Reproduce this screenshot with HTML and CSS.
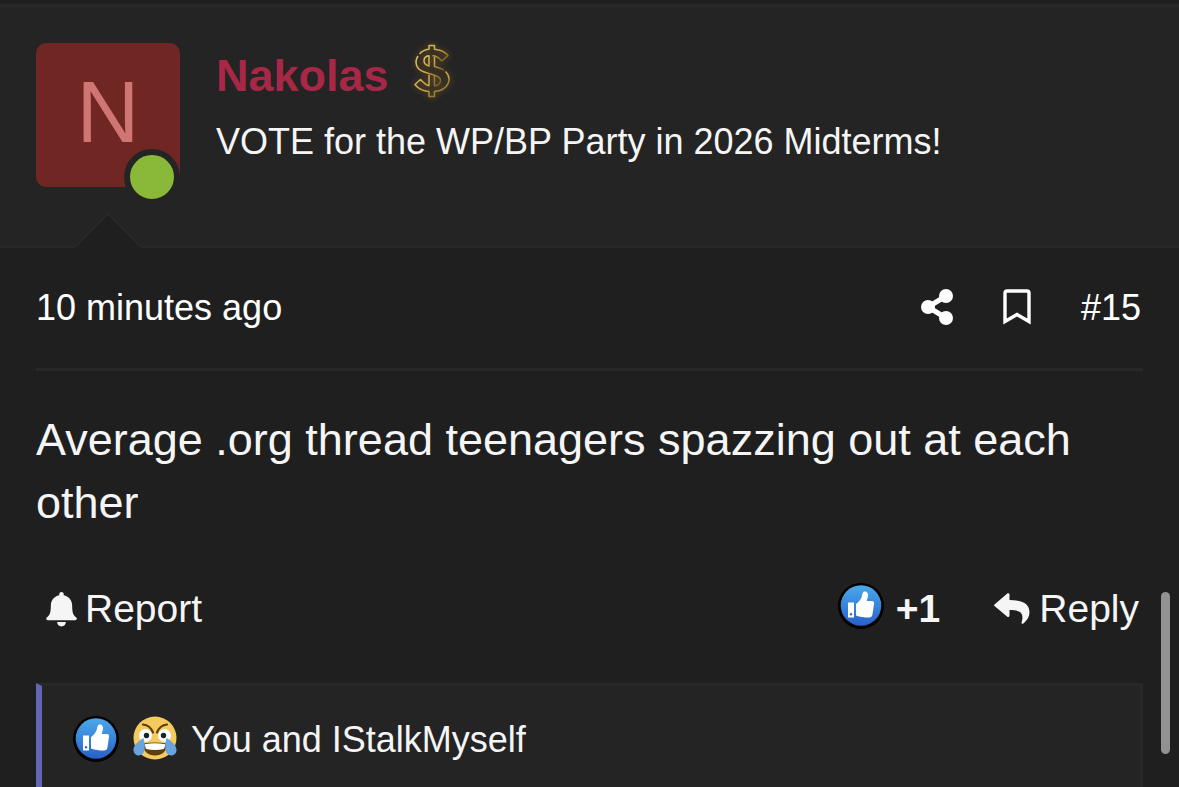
FILE: index.html
```html
<!DOCTYPE html>
<html lang="en">
<head>
<meta charset="utf-8">
<meta name="viewport" content="width=device-width, initial-scale=1">
<title>Thread</title>
<link rel="stylesheet" href="styles.css">
</head>
<body>
<svg class="defs" aria-hidden="true">
  <defs>
    <linearGradient id="like-fill" x1="0" y1="0" x2="0" y2="1">
      <stop offset="0" stop-color="#4ba9ea"/>
      <stop offset="1" stop-color="#2761c8"/>
    </linearGradient>
    <linearGradient id="gold" x1="0" y1="0" x2="1" y2="1">
      <stop offset="0" stop-color="#dcc168"/>
      <stop offset=".55" stop-color="#c5a045"/>
      <stop offset="1" stop-color="#6d5522"/>
    </linearGradient>
    <symbol id="like" viewBox="0 0 46 46">
      <circle cx="23" cy="23" r="23" fill="#000"/>
      <circle cx="23" cy="22.500" r="20.300" fill="url(#like-fill)"/>
      <path fill="#fff" d="M10 19.500h6V34.500h-6zM18 21c2.500-1.500 5-4.500 6-8 .5-2.500.6-4.500 3-4.500s3.500 2.500 2.900 5l-1.200 4.500H34c1.600 0 2.300 1.200 2 2.800l-1.600 11c-.4 1.800-1.400 2.700-3.400 2.700-5 0-9-.4-13-2z"/>
      <circle cx="13" cy="31.300" r="1.200" fill="#2b6bcd"/>
    </symbol>
  </defs>
</svg>
<article class="post">
  <header class="user">
    <a class="avatar" href="#" aria-label="Nakolas">N<span class="online"></span></a>
    <div class="identity">
      <div class="name-row">
        <a class="name" href="#">Nakolas</a>
        <svg class="dollar" viewBox="0 0 48 62" aria-hidden="true">
          <g fill="none" stroke="url(#gold)" stroke-width="1.500" stroke-linejoin="round">
            <path d="M12.500 14C14.500 11.500 18 9.800 22 9.300V5.500h5.500v3.800C33 9.800 38 12 41 15.500L34.800 21C32 17.500 29 15.700 25.500 15.700"/>
            <path d="M11 16c-4 6.500-1.500 13 5 15.500 6 2.300 11.500 3.500 14.500 5 5 2.500 3.500 8.500-3 9.500V34.500"/>
            <path d="M22 15.700c-6.500.8-6.800 8.500 0 10.300zM27.500 17v9.500c4 1.200 7 2 9.500 3.800"/>
            <path d="M38.500 31.500c7 7 3.500 18.500-11 20v5H22v-5c-6-.5-11-3-14-7l5.500-5c3 3.500 5.500 5.500 8.500 6.200V35"/>
          </g>
        </svg>
      </div>
      <div class="title">VOTE for the WP/BP Party in 2026 Midterms!</div>
    </div>
    <svg class="pointer" viewBox="0 0 66 35" aria-hidden="true">
      <path fill="#1f1f1f" d="M0 35 33 1l33 34z"/>
      <path fill="none" stroke="#282828" stroke-width="2" d="M1 33 33 1l32 32"/>
    </svg>
  </header>
  <div class="content">
    <div class="meta">
      <a href="#"><time>10 minutes ago</time></a>
      <div class="tools">
        <button type="button" aria-label="Share"><svg class="share" viewBox="0 0 32 36"><path d="M25 7 7 18l18 11" fill="none" stroke="currentColor" stroke-width="5"/><g fill="currentColor"><circle cx="25" cy="7" r="7"/><circle cx="7" cy="18" r="7"/><circle cx="25" cy="29" r="7"/></g></svg></button>
        <button type="button" aria-label="Bookmark"><svg class="mark" viewBox="0 0 28 36"><path d="M2 32.500V4q0-2 2-2h20q2 0 2 2v28.500l-12-7z" fill="none" stroke="currentColor" stroke-width="3.400"/></svg></button>
        <a href="#">#15</a>
      </div>
    </div>
    <p class="message">Average .org thread teenagers spazzing out at each other</p>
    <div class="actions">
      <button type="button" class="report"><svg class="bell" viewBox="0 0 32 36" aria-hidden="true"><path fill="currentColor" d="M16 0c1.500 0 2.300 1 2.300 2.300v1C24 4.500 27 9 27 14c0 7 1 9.500 4 12 1.500 1.400.6 3-.8 3H1.800C.4 29-.5 27.400 1 26c3-2.500 4-5 4-12C5 9 8 4.500 13.700 3.300v-1C13.700 1 14.500 0 16 0zm-4.500 31h9c0 2.700-2 4.500-4.500 4.500S11.500 33.700 11.500 31z"/></svg>Report</button>
      <div class="respond">
        <button type="button" class="liked" aria-label="Like, +1"><svg class="reaction" aria-hidden="true"><use href="#like"/></svg><b>+1</b></button>
        <button type="button" class="reply"><svg class="arrow" viewBox="0 0 36 32" aria-hidden="true"><path fill="currentColor" d="M.5 11.500 13 .7c1.200-1 2.500-.4 2.500 1V7C28 7.200 35.500 10 35.500 19.500c0 4-2.500 8-6 11-1 .8-2.300 0-1.900-1.300C30.500 20 26 17 15.500 17v5.500c0 1.400-1.400 2-2.500 1L.5 13c-.6-.5-.6-1 0-1.500z"/></svg>Reply</button>
      </div>
    </div>
    <a class="reactions" href="#">
      <svg class="reaction" aria-hidden="true"><use href="#like"/></svg>
      <svg class="laugh" viewBox="0 0 44 44" aria-hidden="true">
        <circle cx="22" cy="22" r="21.500" fill="#f4cb61"/>
        <circle cx="12.500" cy="19.500" r="6.500" fill="#fff"/><circle cx="31.500" cy="19.500" r="6.500" fill="#fff"/>
        <circle cx="13.500" cy="19.500" r="2.700" fill="#18242b"/><circle cx="30.500" cy="19.500" r="2.700" fill="#18242b"/>
        <path d="M10 8.500C15.500 9 18 11.500 20 16.500M34 8.500C28.500 9 26 11.500 24 16.500" fill="none" stroke="#5d3f0d" stroke-width="2.200" stroke-linecap="round"/>
        <path d="M10 27.500c8-1.500 16-1.500 24 0 0 8-5 12-12 12s-12-4-12-12z" fill="#5d3f0d"/>
        <path d="M11.500 28.200c7-1.200 14-1.200 21 0l-1.500 4.800c-6 1.200-12 1.200-18 0z" fill="#fff"/>
        <path d="M10.500 22C5 25.500 0 29.500.5 34.500c.5 4.500 4.500 5.800 7.500 4.500 4.500-2 4.500-9 2.500-17zM33.500 22C39 25.500 44 29.500 43.500 34.500c-.5 4.500-4.500 5.800-7.500 4.500-4.500-2-4.500-9-2.500-17z" fill="#6ba4dc"/>
      </svg>
      <span>You and IStalkMyself</span>
    </a>
  </div>
</article>
<div class="scroll-thumb"></div>
</body>
</html>
```
FILE: styles.css
```css
* {
  box-sizing: border-box;
}

body {
  margin: 0;
  background: #1f1f1f;
  color: #f5f5f5;
  font: 36px/48px "Liberation Sans", Arial, sans-serif;
}

a {
  color: inherit;
  text-decoration: none;
}

button {
  display: flex;
  align-items: center;
  padding: 0;
  border: 0;
  background: none;
  color: inherit;
  font: inherit;
}

svg {
  display: block;
  flex: none;
}

.defs {
  position: absolute;
  width: 0;
  height: 0;
}

.post {
  display: flex;
  flex-direction: column;
  min-height: 100vh;
  padding-top: 4px;
}

.user {
  position: relative;
  display: flex;
  gap: 36px;
  padding: 36px 36px 58px;
  border-top: 3px solid #282828;
  border-bottom: 3px solid #282828;
  background: #242424;
}

.avatar {
  position: relative;
  flex: none;
  width: 144px;
  height: 144px;
  border-radius: 10px;
  background: #702724;
  color: #cf7573;
  font-size: 87px;
  line-height: 138px;
  text-align: center;
}

.online {
  position: absolute;
  right: 0;
  bottom: -18px;
  width: 56px;
  height: 56px;
  border: 6px solid #242424;
  border-radius: 50%;
  background: #8ab839;
}

.identity {
  flex: 1;
  padding-top: 2px;
}

.name-row {
  display: flex;
  align-items: center;
  gap: 18px;
  height: 62px;
}

.name {
  color: #a92746;
  font-size: 45px;
  font-weight: bold;
}

.dollar {
  width: 48px;
  height: 62px;
  margin-bottom: 10px;
  filter: drop-shadow(0 0 3px #8b6a20);
}

.title {
  padding-top: 11px;
}

.pointer {
  position: absolute;
  left: 75px;
  bottom: -3px;
  width: 66px;
  height: 35px;
}

.content {
  display: flex;
  flex: 1;
  flex-direction: column;
  padding: 0 36px;
}

.meta {
  display: flex;
  align-items: center;
  justify-content: space-between;
  height: 123px;
  border-bottom: 3px solid #282828;
  color: #fff;
}

.tools {
  display: flex;
  align-items: center;
  gap: 50px;
  padding-right: 2px;
}

.share,
.mark {
  height: 36px;
  margin-bottom: 3px;
}

.share {
  width: 32px;
}

.mark {
  width: 28px;
}

.message {
  margin: 0;
  padding: 37px 0;
  font-size: 45px;
  line-height: 63px;
}

.actions {
  display: flex;
  align-items: center;
  justify-content: space-between;
  height: 76px;
  padding: 0 4px 0 10px;
  font-size: 39px;
}

.report {
  gap: 8px;
}

.bell {
  width: 31px;
  height: 35px;
}

.respond,
.liked {
  display: flex;
  align-items: center;
}

.respond {
  gap: 54px;
}

.liked {
  gap: 12px;
}

.reply {
  gap: 9px;
}

.reaction {
  width: 46px;
  height: 46px;
}

.liked .reaction {
  margin-bottom: 7px;
}

.arrow {
  width: 36px;
  height: 32px;
}

.reactions {
  display: flex;
  flex: 1;
  align-items: flex-start;
  gap: 14px;
  margin-top: 36px;
  padding: 30px 31px 0;
  border: 3px solid #282828;
  border-bottom: 0;
  border-left: 6px solid #6266b5;
  background: #242424;
}

.laugh {
  width: 44px;
  height: 44px;
}

.scroll-thumb {
  position: fixed;
  top: 592px;
  right: 9px;
  width: 9px;
  height: 162px;
  border-radius: 5px;
  background: #929292;
}
```
